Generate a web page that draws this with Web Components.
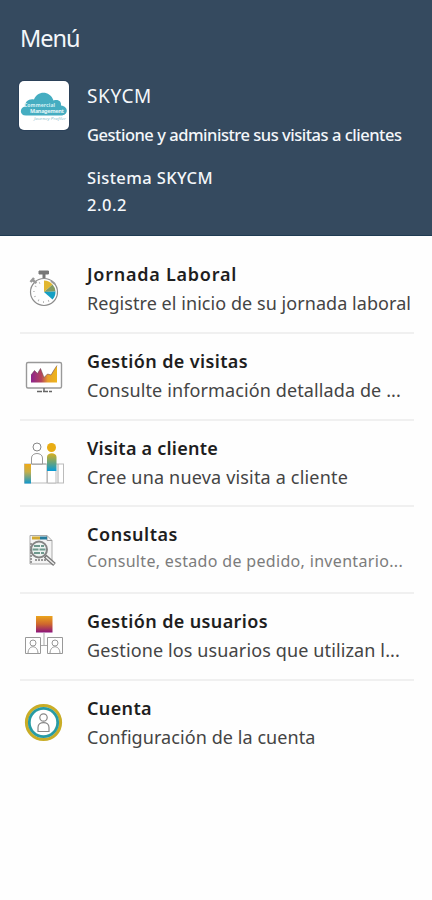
<!DOCTYPE html>
<html lang="es">
<head>
<meta charset="utf-8">
<title>Menú</title>
<style>
body{margin:0;background:#fefefe;font-family:"Noto Sans","Open Sans",sans-serif}
</style>
</head>
<body>
<app-menu></app-menu>
<script>
class FitText extends HTMLElement{
  connectedCallback(){
    const r=this.attachShadow({mode:'open'});
    r.innerHTML='<style>:host{display:block;white-space:pre;width:max-content}</style><slot></slot>';
    const want=+this.getAttribute('span');
    const natural=this.getBoundingClientRect().width;
    this.style.letterSpacing=((want-natural)/(this.textContent.length))+'px';
  }
}
customElements.define('fit-text',FitText);

class AppHeader extends HTMLElement{
  constructor(){
    super();
    this.attachShadow({mode:'open'}).innerHTML=`<style>
    :host{display:block;box-sizing:border-box;height:236px;background:#354a5f;border-bottom:1px solid #1f3b52;color:#f4f7fa;padding:22px 20px 0 19px}
    .title{font-size:23.5px;line-height:32px;margin-left:1px}
    .app{display:flex;gap:18px;margin-top:27px}
    .logo{width:50px;height:49px;flex:none;background:#fff;border-radius:5px;box-shadow:0 0 0 1px #2b4159}
    .logo svg{display:block}
    .info{display:flex;flex-direction:column}
    .name{font-size:19px;line-height:24px;margin-top:3px}
    .sub{font-size:16.5px;font-weight:500;line-height:24px;margin-top:15px}
    .sys{font-size:16.5px;font-weight:500;line-height:26.5px;margin-top:18px}
    </style>
    <fit-text class="title" span="59.500">Menú</fit-text>
    <div class="app">
      <div class="logo"><svg width="50" height="49" viewBox="0 0 50 49">
        <path d="M7 34.500C0 34.500.5 26 6.500 25.500C5.500 20.500 10 17.500 15 18.500C18 9.500 31 9 34.500 19.500C40 18 42.500 21 42 24.500C50 25.500 49.500 34.500 42 34.500Z" fill="#45adc1"/>
        <text x="5" y="26" font-size="5" fill="#d5f1f4" textLength="31" font-weight="bold">Commercial</text>
        <text x="11" y="32" font-size="5.500" fill="#e2f6f8" textLength="34" font-weight="bold">Management</text>
        <text x="15" y="38.500" font-size="4" fill="#8fc3cd" textLength="32" lengthAdjust="spacingAndGlyphs" font-style="italic">Journey Profiler</text>
      </svg></div>
      <div class="info">
        <fit-text class="name" span="65">SKYCM</fit-text>
        <fit-text class="sub" span="314.500">Gestione y administre sus visitas a clientes</fit-text>
        <fit-text class="sys" span="126">Sistema SKYCM</fit-text>
        <fit-text class="sys" style="margin-top:0" span="40">2.0.2</fit-text>
      </div>
    </div>`;
  }
}
customElements.define('app-header',AppHeader);

class MenuRow extends HTMLElement{
  constructor(){
    super();
    this.attachShadow({mode:'open'}).innerHTML=`<style>
    :host{display:flex;box-sizing:border-box;height:86.75px;margin:0 18px 0 20px;gap:19px;border-bottom:2px solid #f0f0f0}
    :host(:last-child){border-bottom-color:transparent}
    .icon{width:48px;flex:none;display:flex;align-items:center;justify-content:center}
    .text{padding-top:13px;min-width:0}
    ::slotted([slot=title]){font-size:18px;font-weight:650;line-height:28px;color:#1e1e1e}
    ::slotted([slot=desc]){font-size:18px;line-height:30px;color:#444}
    :host([muted]) ::slotted([slot=desc]){font-size:16px;line-height:26px;color:#7c7c7c}
    </style>
    <div class="icon"><slot name="icon"></slot></div>
    <div class="text"><slot name="title"></slot><slot name="desc"></slot></div>`;
  }
}
customElements.define('menu-row',MenuRow);

const icons={
clock:`<g fill="none"><path d="M19 6h9.500v3h-9.500z" fill="#777" stroke="#777"/><path d="M24 9v4" stroke="#777" stroke-width="3"/><circle cx="24" cy="27" r="13.500" stroke="#8c8c8c" stroke-width="1.200"/><circle cx="24" cy="27" r="10" stroke="#aaa" stroke-width="2" stroke-dasharray=".8 4.436"/><path d="M12.500 15l4 3M10.500 17l3.500-4" stroke="#999" stroke-width="2.500"/></g><path d="M24 27V15.500a11.500 11.500 0 0 1 8.500 4z" fill="#e2b730"/><path d="M24 27l8.500-7.500a11.500 11.500 0 0 1 3 7z" fill="#849a62"/><path d="M24 27l11.500-.5a11.500 11.500 0 0 1-3 8z" fill="#149fc4"/><path d="M31 16l4 3" stroke="#999" stroke-width="2"/>`,
chart:`<rect x="6.500" y="10.500" width="35" height="25.500" rx="1.500" fill="#fff" stroke="#999" stroke-width="1.400"/><path d="M11 30.500V23l3.500-4.500 3 3 3-5 3.500 9 3.500-3.500 3.500 1 3-5 3-4.500V30.500z" fill="url(#pg)"/><path d="M11 23l3.500-4.500 3 3 3-5 3.500 9 3.500-3.500 3.500 1 3-5 3-4.500" fill="none" stroke="#65404a" stroke-opacity=".55"/><path d="M24 36v3M17 39.500h15" stroke="#666" stroke-width="1.400" stroke-dasharray="5 1"/>`,
visit:`<rect x="4.500" y="25" width="39" height="19" fill="#fff" stroke="#bbb"/><path d="M27 25v19M38 25v19M12 25h14" stroke="#aaa"/><rect x="4.500" y="25" width="6.500" height="19.500" fill="url(#yb)"/><circle cx="17" cy="8" r="4" fill="#fff" stroke="#888"/><path d="M11.500 25v-6c0-6 11-6 11 0v6z" fill="#fff" stroke="#999"/><circle cx="31.500" cy="8.500" r="4.500" fill="#e9ad14"/><path d="M27 32V18c0-5 9.500-5 9.500 0v14z" fill="url(#yb2)"/><path d="M27.500 32v12h8.500V32" fill="#fff" stroke="#bbb"/>`,
search:`<path d="M10 9.500h17l5 5V38H10z" fill="#f4f4f4" stroke="#aaa"/><path d="M27 9.500v5h5" fill="none" stroke="#999"/><path d="M12 12h8" stroke="#d2aa32" stroke-width="3"/><path d="M20 12h7" stroke="#257b9c" stroke-width="3"/><path d="M11 17v20M15 34h13" stroke="#999" stroke-width="2" stroke-dasharray="2 1"/><circle cx="19" cy="23.500" r="8" fill="#edf3f1" stroke="#858585" stroke-width="2"/><path d="M14 20h10M12.500 23.500h13M14 27h10" stroke="#70998e" stroke-width="2" stroke-dasharray="6 1"/><path d="M25 30l9.500 8.500" stroke="#777" stroke-width="4"/><path d="M26 31l8 7" stroke="#eee" stroke-width="1.500"/>`,
users:`<rect x="16" y="4" width="16.500" height="16.500" fill="url(#yp)"/><path d="M24 20.500v13M20 33.500h8" stroke="#aaa"/><g fill="#fff" stroke="#999"><path d="M5.500 25.500h15v16h-15zM27.500 25.500h15v16h-15z"/><circle cx="13" cy="31" r="3"/><circle cx="35" cy="31" r="3"/><path d="M8 41.500c0-9 10-9 10 0M30 41.500c0-9 10-9 10 0" fill="none"/></g>`,
account:`<circle cx="23.500" cy="23.500" r="17" fill="#fff" stroke="#c9ad27" stroke-width="3.200"/><circle cx="23.500" cy="23.500" r="14.200" fill="#fff" stroke="#289ba4" stroke-width="2.800"/><g fill="#fff" stroke="#888" stroke-width="1.200"><circle cx="23.500" cy="18.500" r="3.700"/><path d="M18 32.500v-4c0-6.500 11-6.500 11 0v4z"/></g>`};
class MenuIcon extends HTMLElement{
  connectedCallback(){
    this.attachShadow({mode:'open'}).innerHTML=`<style>:host{display:block;width:48px;height:48px}svg{display:block}</style>
    <svg width="48" height="48" viewBox="0 0 48 48"><defs>
    <linearGradient id="pg"><stop stop-color="#8d248d"/><stop offset=".4" stop-color="#b4445c"/><stop offset=".65" stop-color="#e8a12b"/><stop offset="1" stop-color="#edb51c"/></linearGradient>
    <linearGradient id="yb" x2="0" y2="1"><stop stop-color="#f0a914"/><stop offset=".4" stop-color="#c6af48"/><stop offset="1" stop-color="#0c98d0"/></linearGradient>
    <linearGradient id="yb2" x2="0" y2="1"><stop stop-color="#d9b020"/><stop offset=".5" stop-color="#6da477"/><stop offset="1" stop-color="#089bd6"/></linearGradient>
    <linearGradient id="yp" x2="0" y2="1"><stop stop-color="#eba51c"/><stop offset=".5" stop-color="#ce652e"/><stop offset="1" stop-color="#8b127c"/></linearGradient>
    </defs>${icons[this.getAttribute('name')]}</svg>`;
  }
}
customElements.define('menu-icon',MenuIcon);

class AppMenu extends HTMLElement{
  constructor(){
    super();
    const rows=[
      ['clock','Jornada Laboral',150,'Registre el inicio de su jornada laboral',324],
      ['chart','Gestión de visitas',161,'Consulte información detallada de ...',314],
      ['visit','Visita a cliente',131,'Cree una nueva visita a cliente',261],
      ['search','Consultas',91,'Consulte, estado de pedido, inventario...',316,'muted'],
      ['users','Gestión de usuarios',181,'Gestione los usuarios que utilizan l...',313],
      ['account','Cuenta',65,'Configuración de la cuenta',228.5]];
    this.attachShadow({mode:'open'}).innerHTML=`<style>:host{display:block;height:900px;overflow:hidden}nav{padding-top:11px}</style>
    <app-header></app-header><nav>${rows.map(([i,t,tw,d,dw,m=''])=>`<menu-row ${m}><menu-icon slot="icon" name="${i}"></menu-icon><fit-text slot="title" span="${tw}">${t}</fit-text><fit-text slot="desc" span="${dw}">${d}</fit-text></menu-row>`).join('')}</nav>`;
  }
}
customElements.define('app-menu',AppMenu);
</script>
</body>
</html>
